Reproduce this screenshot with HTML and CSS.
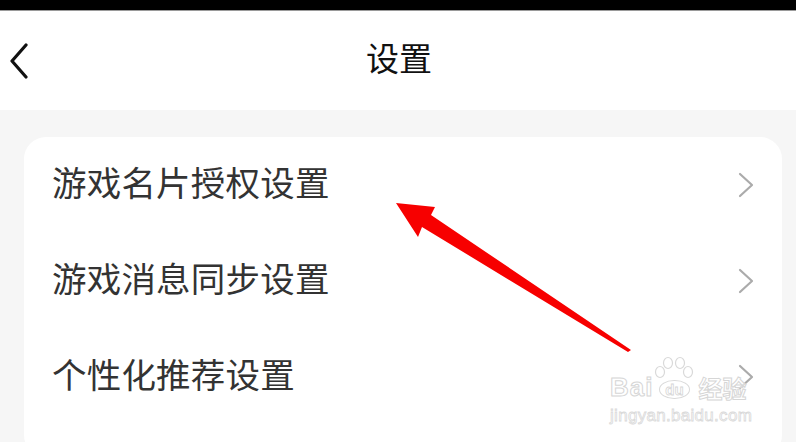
FILE: index.html
```html
<!DOCTYPE html>
<html lang="zh">
<head>
<meta charset="utf-8">
<link rel="stylesheet" href="styles.css">
</head>
<body>
<div class="statusbar"></div>
<header class="header">
  <svg class="back" width="22" height="36" viewBox="0 0 22 36"><path d="M18 2 L4 18 L18 34" fill="none" stroke="#111" stroke-width="3.2" stroke-linecap="round" stroke-linejoin="round"/></svg>
  <h1 class="title">设置</h1>
</header>
<main class="main">
  <section class="card">
    <div class="row"><span class="label">游戏名片授权设置</span><svg class="chev" width="16" height="26" viewBox="0 0 16 26"><path d="M2 2 L14 13 L2 24" fill="none" stroke="#ababab" stroke-width="2.2" stroke-linecap="round" stroke-linejoin="round"/></svg></div>
    <div class="row"><span class="label">游戏消息同步设置</span><svg class="chev" width="16" height="26" viewBox="0 0 16 26"><path d="M2 2 L14 13 L2 24" fill="none" stroke="#ababab" stroke-width="2.2" stroke-linecap="round" stroke-linejoin="round"/></svg></div>
    <div class="row"><span class="label">个性化推荐设置</span><svg class="chev" width="16" height="26" viewBox="0 0 16 26"><path d="M2 2 L14 13 L2 24" fill="none" stroke="#ababab" stroke-width="2.2" stroke-linecap="round" stroke-linejoin="round"/></svg></div>
  </section>
</main>
<svg class="arrow" width="796" height="442" viewBox="0 0 796 442"><polygon points="396,203 435,207 431,215 631,350 628,352 422,227 418,237" fill="#f70000"/></svg>
<div class="watermark">
  <div class="wm-top">
    <span class="wm-bai">Bai</span>
    <span class="wm-paw">
      <svg width="40" height="24" viewBox="0 0 40 24"><g fill="none" stroke="#d9d9d9" stroke-width="1.2"><ellipse cx="6" cy="16" rx="4.5" ry="5.5"/><ellipse cx="14" cy="7" rx="4.5" ry="5.5"/><ellipse cx="26" cy="7" rx="4.5" ry="5.5"/><ellipse cx="34" cy="16" rx="4.5" ry="5.5"/></g></svg>
      <span class="wm-du">du</span>
    </span>
    <span class="wm-jy">经验</span>
  </div>
  <div class="wm-url">jingyan.baidu.com</div>
</div>
</body>
</html>
```
FILE: styles.css
```css
html, body {
  margin: 0;
  padding: 0;
}
body {
  width: 796px;
  height: 442px;
  overflow: hidden;
  background: #f6f6f6;
  font-family: "Noto Sans CJK SC", "Noto Sans", sans-serif;
  position: relative;
}
.statusbar {
  height: 10px;
  background: #000;
  border-bottom: 1px solid #9a9a9a;
}
.header {
  height: 99px;
  background: #fff;
  display: flex;
  align-items: center;
  justify-content: center;
  position: relative;
}
.back {
  position: absolute;
  left: 8px;
  top: 32px;
}
.title {
  margin: -7px 0 0 2px;
  font-size: 33px;
  font-weight: 400;
  color: #111;
  line-height: 1;
}
.main {
  padding: 27px 14px 0 24px;
}
.card {
  background: #fff;
  border-radius: 22px;
  height: 320px;
}
.row {
  height: 96px;
  box-sizing: border-box;
  display: flex;
  align-items: center;
  justify-content: space-between;
  padding: 0 28px 7px 28px;
}
.chev {
  margin-top: 7px;
}
.label {
  font-size: 34.5px;
  color: #333;
  line-height: 1;
  letter-spacing: 0.2px;
}
.chev {
  flex: none;
}
.arrow {
  position: absolute;
  left: 0;
  top: 0;
}
.watermark {
  position: absolute;
  left: 610px;
  top: 356px;
  font-family: "Liberation Sans", sans-serif;
  color: #fff;
}
.wm-top {
  display: flex;
  align-items: flex-end;
  height: 44px;
}
.wm-bai, .wm-jy {
  font-size: 26px;
  line-height: 1;
  color: rgba(255,255,255,0.6);
  -webkit-text-stroke: 1px #d6d6d6;
  font-weight: 700;
  letter-spacing: 1px;
}
.wm-jy {
  font-family: "Noto Sans CJK SC", sans-serif;
  font-size: 24px;
  margin-left: 3px;
  letter-spacing: 0;
}
.wm-paw {
  width: 42px;
  height: 44px;
  display: flex;
  flex-direction: column;
  align-items: center;
}
.wm-du {
  font-size: 15px;
  font-weight: 700;
  color: #fff;
  -webkit-text-stroke: 0.8px #d6d6d6;
  border: 1.2px solid #d9d9d9;
  border-radius: 50%;
  padding: 0 5px;
  line-height: 17px;
}
.wm-url {
  font-size: 17px;
  color: rgba(255,255,255,0.6);
  -webkit-text-stroke: 0.8px #d9d9d9;
  margin-top: 6px;
  letter-spacing: 0.3px;
}
```
